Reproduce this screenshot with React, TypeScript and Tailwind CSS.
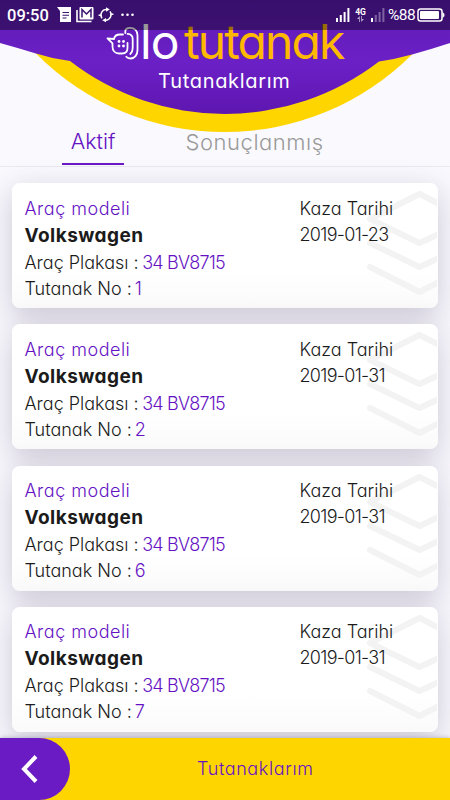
import { clsx } from "clsx";

type Report = {
  no: string;
  model: string;
  plate: string;
  date: string;
};

const REPORTS: Report[] = [
  { no: "1", model: "Volkswagen", plate: "34 BV8715", date: "2019-01-23" },
  { no: "2", model: "Volkswagen", plate: "34 BV8715", date: "2019-01-31" },
  { no: "6", model: "Volkswagen", plate: "34 BV8715", date: "2019-01-31" },
  { no: "7", model: "Volkswagen", plate: "34 BV8715", date: "2019-01-31" },
];

function Signal({ weak }: { weak?: boolean }) {
  return (
    <svg width="14" height="14" viewBox="0 0 14 14" fill="#fff">
      <rect x="0" y="10" width="2" height="4" />
      <rect x="3.8" y="7" width="2" height="7" opacity={weak ? 0.35 : 1} />
      <rect x="7.6" y="4" width="2" height="10" opacity={weak ? 0.35 : 1} />
      <rect x="11.4" y="0" width="2" height="14" opacity={weak ? 0.35 : 1} />
    </svg>
  );
}

function StatusBar() {
  return (
    <div className="absolute inset-x-0 top-0 flex h-[30px] items-center bg-black/40 pl-[7px] font-['Roboto',sans-serif] text-white">
      <span className="w-[50px] text-[16.5px] font-medium leading-[31px]">09:50</span>
      <svg className="shrink-0" width="80" height="30" viewBox="57 0 80 30" fill="none">
        <path d="M57 7h14v15H60V11z" fill="#fff" />
        <path d="M62.5 12.5h6.5M62.5 15.3h6.5M62.5 18h4" stroke="#3b1370" strokeWidth="1.1" />
        <path d="M77 10v11.5H91.5" stroke="#fff" strokeWidth="1.6" />
        <rect x="79.5" y="7" width="14" height="12.5" rx="1" fill="#fff" />
        <path d="M82 17.5v-8l4.500 4.500 4.500-4.500v8" stroke="#3b1370" strokeWidth="1.5" />
        <path d="M102 18.300a5.600 5.600 0 0 1 4.500-8.900M110 11.300a5.600 5.600 0 0 1-4.500 8.900" stroke="#fff" strokeWidth="1.4" />
        <path d="m106 7.300 3.800 2.200-3.800 2.200zM106 17.900l-3.800 2.300 3.800 2z" fill="#fff" />
        <path d="M98.600 15.300h3M110.400 14.200h3" stroke="#fff" strokeWidth="1.4" />
        <g fill="#fff">
          <circle cx="122.5" cy="14.8" r="1.3" />
          <circle cx="127.5" cy="14.8" r="1.3" />
          <circle cx="132.5" cy="14.8" r="1.3" />
        </g>
      </svg>
      <div className="ml-auto flex items-center">
        <Signal />
        <div className="ml-[4px] flex w-[13px] flex-col items-center">
          <span className="text-[8.5px] font-bold leading-[8px]">4G</span>
          <svg width="7" height="6" viewBox="0 0 7 6" fill="#fff" opacity=".65">
            <path d="M0 3 2.8 0v6H2V3zM7 3 4.2 6V0H5v3z" />
          </svg>
        </div>
        <span className="ml-[4px]">
          <Signal weak />
        </span>
        <span className="ml-[3px] w-[29px] text-[15.5px] leading-[30px] tracking-[-0.5px]">%88</span>
        <svg className="mr-[5px]" width="28" height="14" viewBox="0 0 28 14" fill="none">
          <rect x="1" y="1" width="24" height="12" rx="2.5" stroke="#fff" strokeWidth="1.5" />
          <rect x="3" y="3" width="19" height="8" rx="1" fill="#fff" />
          <path d="M25.5 4.5c2 .5 2 4.500 0 5" fill="#fff" stroke="#fff" />
        </svg>
      </div>
    </div>
  );
}

function Header() {
  return (
    <header className="relative h-[120px] shrink-0">
      <svg className="absolute left-0 top-0" width="450" height="134" viewBox="0 0 450 134">
        <defs>
          <linearGradient id="dome" x1="0" y1="0" x2="0" y2="1">
            <stop offset="0" stopColor="#5f1ab5" />
            <stop offset=".55" stopColor="#6b20c6" />
            <stop offset="1" stopColor="#5e16b0" />
          </linearGradient>
        </defs>
        <circle cx="224.5" cy="-133.6" r="265.6" fill="#ffd500" />
        <path d="M0 0H450V43Q432 49 412 54.500Q396 59 379 61.500A253 253 0 0 1 70 61Q53 59 36 53.500Q18 48 0 43Z" fill="url(#dome)" />
      </svg>
      <div className="relative flex h-full flex-col">
        <div className="flex items-center pl-[106px] pt-[21px]">
          <svg className="mt-px shrink-0" width="34" height="40" viewBox="106 22 34 40" fill="none" stroke="#fff" strokeWidth="1.8" strokeLinecap="round" strokeLinejoin="round">
            <path d="M123 34.500h-3c-3.500 0-5.500 1.500-6 4.500l-6.500-.6 5 5v3.100c0 4 2.500 7 6.500 7h3c3.500 0 5.500-2.200 5.500-5.500v-5" />
            <path d="M125.300 33v-1.500c0-2.500 2-3.700 4.700-3.700 4.500 0 7.500 3 7.500 7.500V50c0 5-3 8.500-7 8.500-2 0-3.300-.6-4.200-1.800" />
            <path d="M127.500 33.800c3.200 .2 5.200 2.200 5.200 5.200v9c0 3-.7 4.500-2.400 6" />
            <g fill="#fff" stroke="none">
              <circle cx="119" cy="41.5" r="1.4" />
              <circle cx="123.5" cy="41.5" r="1.4" />
              <circle cx="119" cy="46" r="1.4" />
              <circle cx="123.5" cy="46" r="1.4" />
            </g>
          </svg>
          <div className="flex whitespace-nowrap text-[48px] font-normal leading-[36px]">
            <span className="w-[44px] tracking-[-1px] text-white">lo</span>
            <span className="tracking-[-1.9px] text-[#ffb900]">tutanak</span>
          </div>
        </div>
        <h1 className="pl-[158px] text-[20px] font-normal leading-[38px] tracking-[0.7px] text-white">Tutanaklarım</h1>
      </div>
      <StatusBar />
    </header>
  );
}

function Tabs() {
  return (
    <nav className="relative flex h-[47px] shrink-0 border-b border-[#ebeaf0]">
      <button className="ml-[62px] h-[45px] w-[62px] border-b-[2px] border-[#6a1bc4] text-[21.5px] font-light leading-[39px] text-[#6512c4]">
        Aktif
      </button>
      <button className="ml-[61.5px] h-[44px] whitespace-nowrap text-left text-[22px] font-light leading-[44px] tracking-[0.55px] text-[#999]">
        Sonuçlanmış
      </button>
    </nav>
  );
}

function ReportCard({ report, first }: { report: Report; first?: boolean }) {
  return (
    <article
      className={clsx(
        "relative flex h-[125px] shrink-0 rounded-[8px] bg-gradient-to-b from-white from-70% to-[#fafafa] pl-[12.5px] pt-[11.5px] text-[18px] font-light leading-[27px] text-[#1b1b1b] shadow-[0_9px_30px_1px_rgba(70,60,100,0.25)]",
        !first && "mt-[16.3px]",
      )}
    >
      <svg className="absolute right-[1px] top-0" width="70" height="125" viewBox="0 0 70 125" fill="none" stroke="#f3f3f3" strokeWidth="6" strokeLinecap="round" strokeLinejoin="round">
        <path d="M74 22 52.500 11 3 36 52.500 60 74 50" />
        <path d="M3 60 52.500 84 74 74" />
        <path d="M3 84 52.500 109 74 98" />
      </svg>
      <div className="relative w-[275px] whitespace-nowrap">
        <p className="tracking-[0.5px] text-[#6512c4]">Araç modeli</p>
        <p className="text-[19px] font-bold tracking-[0.45px]">{report.model}</p>
        <p>
          Araç Plakası :<span className="ml-[3.5px] tracking-[-0.8px] text-[#6512c4]">{report.plate}</span>
        </p>
        <p className="leading-[26px]">
          Tutanak No :<span className="ml-[3px] text-[#6512c4]">{report.no}</span>
        </p>
      </div>
      <div className="relative whitespace-nowrap">
        <p>Kaza Tarihi</p>
        <p className="leading-[26.5px] tracking-[-0.7px]">{report.date}</p>
      </div>
    </article>
  );
}

function BottomBar() {
  return (
    <footer className="relative flex h-[62px] shrink-0 items-center bg-[#ffd500] shadow-[0_-1px_4px_rgba(60,50,90,0.25)]">
      <button className="h-[62px] w-[70px] rounded-r-[31px] bg-[#6a1bc4]" aria-label="Geri">
        <svg width="70" height="62" viewBox="0 0 70 62" fill="none" stroke="#fff" strokeWidth="4">
          <path d="M36 18.500 24 31l12 12.500" />
        </svg>
      </button>
      <span className="ml-[127px] whitespace-nowrap pb-[2px] text-[18px] font-light tracking-[0.6px] text-[#6512c4]">Tutanaklarım</span>
    </footer>
  );
}

export default function App() {
  return (
    <div className="flex h-[800px] w-[450px] flex-col overflow-hidden bg-[#faf9fe] font-['Inter',sans-serif] [font-feature-settings:'cv11']">
      <Header />
      <Tabs />
      <main className="min-h-0 flex-1 px-[12px] pt-[16px]">
        {REPORTS.map((report, i) => (
          <ReportCard key={report.no} report={report} first={i === 0} />
        ))}
      </main>
      <BottomBar />
    </div>
  );
}
